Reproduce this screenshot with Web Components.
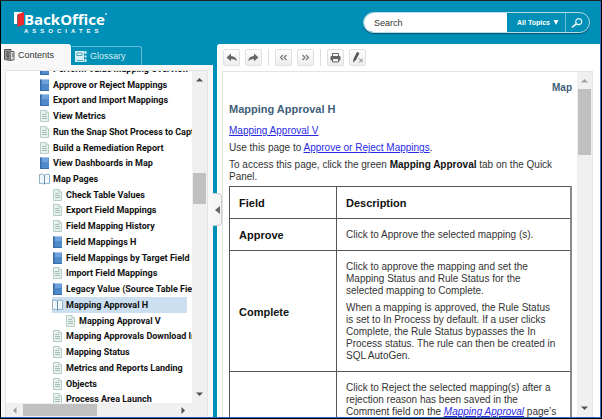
<!DOCTYPE html>
<html lang="en">
<head>
<meta charset="utf-8">
<title>Mapping Approval H</title>
<style>
html,body{height:100%;margin:0}
body{font-family:"Liberation Sans",Arial,sans-serif;--teal:#008fb6;background:#000}
</style>
</head>
<body>
<help-app>
  <brand-bar slot="header"><search-box></search-box></brand-bar>
  <nav-pane slot="nav"></nav-pane>
  <topic-pane slot="topic">
    <topic-doc></topic-doc>
  </topic-pane>
</help-app>

<script>
const define = (name, html, init) => {
  const t = document.createElement('template');
  t.innerHTML = '<style>*{box-sizing:border-box}</style>' + html;
  customElements.define(name, class extends HTMLElement {
    connectedCallback() {
      if (this.shadowRoot) return;
      this.attachShadow({mode: 'open'}).append(t.content.cloneNode(true));
      if (init) init(this, this.shadowRoot);
    }
  });
};

define('help-app', `
<style>
:host{display:grid;box-sizing:border-box;height:100vh;grid-template:43px minmax(0,1fr)/212px minmax(0,1fr);column-gap:4px;
 background:var(--teal);border:1px solid #000;border-top-color:#222;box-shadow:inset -1px -1px #3568b8;padding:0 1px 1px 0;overflow:hidden}
slot[name=header]::slotted(*){grid-column:1/-1}
</style>
<slot name="header"></slot><slot name="nav"></slot><slot name="topic"></slot>`);

define('brand-bar', `
<style>
:host{display:flex;justify-content:space-between;align-items:center;padding:0 10px 0 13px;color:#fff}
.logo{display:grid;grid-template-columns:10px auto;align-items:center}
svg{display:block}
.name{font:700 15px/16px "Open Sans",sans-serif;position:relative}
.name::after{content:"";position:absolute;right:-2px;top:2px;width:2px;height:2px;border-radius:1px;background:#cfe9f1}
.sub{grid-column:2;font:700 6px/8px "Liberation Sans",sans-serif;letter-spacing:4px}
</style>
<div class="logo">
<svg width="10" height="16" viewBox="0 0 10 16"><path d="M0 1H8V4H3V13H0Z" fill="#fff"/><path d="M3.5 3.2 10 1V13.5L3.5 16Z" fill="#ee2a2e"/></svg>
<span class="name">BackOffice</span><span class="sub">ASSOCIATES</span>
</div>
<slot></slot>`);

define('search-box', `
<style>
:host{display:block;flex:0 1 227px}
form{display:flex;height:21px;border-radius:11px;border:1px solid #b5dce8;box-shadow:0 1px 1px #0a5069;overflow:hidden}
input{flex:1;min-width:0;border:0;padding:0 10px;background:#fff;font:9px "Liberation Sans",sans-serif;color:#333;outline:0}
input::placeholder{color:#333;opacity:1}
.pick{display:flex;align-items:center;padding:0 6px 0 10px;gap:3px;border-right:1px solid #6fc0d6}
select{appearance:none;border:0;padding:0;background:none;color:#fff;font:700 7px "Liberation Sans",sans-serif}
option{color:#333}
button{border:0;padding:0 6px 0 5px;background:none;display:flex;align-items:center}
</style>
<form onsubmit="return false">
<input aria-label="Search" placeholder="Search">
<span class="pick"><select aria-label="Topics"><option>All Topics</option></select>
<svg width="6" height="5" viewBox="0 0 6 5"><path d="M.5 0h5L3 5Z" fill="#fff"/></svg></span>
<button aria-label="Run search"><svg width="12" height="10" viewBox="0 0 12 10" fill="none" stroke="#e8f5f9"><circle cx="7.7" cy="3.7" r="3" stroke-width="1.2"/><path d="M5.3 5.8 1 9.3" stroke-width="1.7"/></svg></button>
</form>`);

define('scroll-bar', `
<style>
:host{display:flex;flex-direction:column;background:#f0f0f0;min-width:0;min-height:0}
:host([across]){flex-direction:row}
svg{flex:none;display:block;margin:auto}
.end{flex:0 0 17px;display:flex}
.thumb{background:#c0c0c0;margin:0 1px}
:host([across]) .thumb{margin:1px 0}
</style>
<span class="end"><svg width="7" height="7" viewBox="0 0 7 7"><path/></svg></span>
<span class="pre"></span><span class="thumb"></span><span class="post"></span>
<span class="end"><svg width="7" height="7" viewBox="0 0 7 7"><path/></svg></span>`,
(el, root) => {
  const [a, b] = root.querySelectorAll('path');
  const across = el.hasAttribute('across');
  a.setAttribute('d', across ? 'M5.5 0v7L2 3.5Z' : 'M0 5.5h7L3.5 2Z');
  b.setAttribute('d', across ? 'M1.5 0v7L5 3.5Z' : 'M0 1.5h7L3.5 5Z');
  a.setAttribute('fill', el.hasAttribute('at-start') ? '#a0a0a0' : '#505050');
  b.setAttribute('fill', '#505050');
  el.getAttribute('parts').split(' ').forEach((n, i) => {
    root.querySelector(['.pre', '.thumb', '.post'][i]).style.flex = n + ' 1 0';
  });
});

define('nav-pane', `
<style>
:host{display:flex;flex-direction:column;min-height:0;min-width:0}
.tabs{display:flex;gap:1px;height:21px;flex:none;align-items:stretch}
button{display:flex;align-items:center;gap:3px;width:70px;padding:0 0 0 3px;border:0;font:9px "Liberation Sans",sans-serif;
 background:#f8f8f8;color:#333;border-radius:0 3px 0 0}
button.off{margin-top:2px;background:none;color:#d8eef4;border:solid #62b9d0;border-width:1px 1px 0 0}
.body{flex:1;min-height:0;background:#f7f7f7;padding:5px 5px 0 4px;display:flex}
.box{flex:1;min-width:0;display:grid;grid-template:minmax(0,1fr) 14px/minmax(0,1fr) 15px;border:1px solid #e3e3e3;border-bottom:0;background:#fff}
.view{overflow:hidden;display:flex;min-height:0}
.corner{background:#f0f0f0}
</style>
<div class="tabs" role="tablist">
<button role="tab" aria-selected="true"><svg width="11" height="12" viewBox="0 0 11 12"><path d="M.5 .5H7V11.500L.5 10.5Z" fill="#999" stroke="#555"/><path d="M7 2.500h3v8.500H7" fill="#ddd" stroke="#666"/><path d="M2 3h3.500M2 5h3.500M2 7h3.500M4 7v3M8 5h1.500M8 7h1.500" stroke="#444"/></svg>Contents</button>
<button role="tab" class="off"><svg width="12" height="12" viewBox="0 0 12 12"><path d="M0 1h9v11H0Z" fill="#d5edf4"/><path d="M2 3h5v2.500H2ZM2 10.500h6" fill="#fff" stroke="#3ea4c0"/><path d="M10.500 1v3M10.500 5.500v2M10.500 9v3" stroke="#d5edf4" stroke-width="2"/></svg>Glossary</button>
</div>
<div class="body"><div class="box">
<div class="view"><topic-tree></topic-tree></div>
<scroll-bar parts="85 31 183"></scroll-bar>
<scroll-bar across at-start parts="0 74 79"></scroll-bar>
<span class="corner"></span>
</div></div>`);

define('topic-tree', `
<style>
:host{display:flex;flex-direction:column;flex:1;min-width:0;margin:-10px 0 -4px;padding-right:5px}
</style>`, (el, root) => {
  [[1,'book','Perform Value Mapping Overview'],[1,'book','Approve or Reject Mappings'],[1,'book','Export and Import Mappings'],
   [1,'page','View Metrics'],[1,'page','Run the Snap Shot Process to Capture'],[1,'page','Build a Remediation Report'],
   [1,'book','View Dashboards in Map'],[1,'open','Map Pages'],[2,'page','Check Table Values'],[2,'page','Export Field Mappings'],
   [2,'page','Field Mapping History'],[2,'book','Field Mappings H'],[2,'book','Field Mappings by Target Field'],
   [2,'page','Import Field Mappings'],[2,'book','Legacy Value (Source Table Field)'],[2,'open','Mapping Approval H',1],
   [3,'page','Mapping Approval V'],[2,'page','Mapping Approvals Download Import'],[2,'page','Mapping Status'],
   [2,'page','Metrics and Reports Landing'],[2,'page','Objects'],[2,'page','Process Area Launch']
  ].forEach(([level, kind, text, on]) => {
    const n = document.createElement('tree-node');
    n.setAttribute('level', level); n.setAttribute('kind', kind);
    if (on) n.setAttribute('selected', '');
    n.textContent = text;
    root.append(n);
  });
});

const GLYPHS = {
  book: '<path d="M1 .5h9v11H1Z" fill="#4f8acb"/><path d="M1 .5h1.500v11H1Z" fill="#3a6cab"/><path d="M3 1h6.500v4H3Z" fill="#6fa2da"/><path d="M1 11.500H10" stroke="#3a6cab"/>',
  page: '<path d="M1.500.5h5.500l2.500 2.500v8.500h-8Z" fill="#e6f1ee" stroke="#b7cec8"/><path d="M7 .5v2.500h2.500" fill="#fff" stroke="#a9c3bc"/><path d="M3 4.500h4M3 6.500h5M3 8.500h5" stroke="#a5c0ba"/>',
  open: '<path d="M.5 1.500q3-1 5 .7 2-1.700 5-.7v9q-3-.8-5 .5-2-1.300-5-.5Z" fill="#f5fafc" stroke="#8fadc3"/><path d="M5.500 2v9" stroke="#5d8db5"/><path d="M2 4h2M2 6h2M7 4h2M7 6h2" stroke="#dbe8f0"/>'
};
define('tree-node', `
<style>
:host{display:flex;flex:1 0 15px;min-height:15px}
:host([level="1"]){padding-left:33px}:host([level="2"]){padding-left:46px}:host([level="3"]){padding-left:59px}
a{flex:1;min-width:0;display:flex;align-items:center;gap:3px;color:#111;text-decoration:none;white-space:nowrap;font:700 9px/12px Roboto,"Liberation Sans",sans-serif}
:host([selected]) a{background:#cbdff0}
svg{flex:none}
</style>
<a href="#"><svg width="11" height="12" viewBox="0 0 11 12"></svg><slot></slot></a>`,
(el, root) => { root.querySelector('svg').innerHTML = GLYPHS[el.getAttribute('kind')]; });

const ACTIONS = {
  Back: '<path d="M5 1.500V4q5 .2 6 5-2.500-2-6-2v2.300L.5 5.400Z" fill="#666"/>',
  Forward: '<path d="M6 1.500V4q-5 .2-6 5 2.500-2 6-2v2.300l4.500-3.900Z" fill="#666"/>',
  Previous: '<path d="M5 3 2.500 5.500 5 8M8.500 3 6 5.500 8.500 8" fill="none" stroke="#777" stroke-width="1.200"/>',
  Next: '<path d="M2.500 3 5 5.500 2.500 8M6 3 8.500 5.500 6 8" fill="none" stroke="#777" stroke-width="1.200"/>',
  Print: '<path d="M2.500 4V1.500h6V4" fill="none" stroke="#666"/><rect x=".5" y="4" width="10" height="4.500" rx="1" fill="#666"/><path d="M2.500 6.500h6v3.500h-6Z" fill="#eee" stroke="#666"/>',
  Unhighlight: '<path d="M5 0 7.500 1 4 8 1 10.500 1.500 7Z" fill="#555"/><path d="m7 6.500 4 4m0-4-4 4" stroke="#777"/>'
};
define('tool-button', `
<style>
:host{display:block}
button{display:grid;place-items:center;width:17px;height:17px;padding:0;border:1px solid #e0e0e0;border-radius:2px;background:linear-gradient(#fefefe,#eee)}
</style>
<button><svg width="11" height="11" viewBox="0 0 11 11"></svg></button>`,
(el, root) => {
  const k = el.getAttribute('action');
  root.querySelector('button').setAttribute('aria-label', k);
  root.querySelector('svg').innerHTML = ACTIONS[k];
});

define('topic-pane', `
<style>
:host{display:flex;flex-direction:column;min-width:0;min-height:0;position:relative;background:#fff;border-radius:3px 0 0 0;padding:5px 7px 0 5px}
.tools{display:flex;gap:5px;padding:0 1px;margin-bottom:5px;flex:none}
i{width:1px;background:#ddd;margin:0 1px}
.frame{flex:1;min-height:0;display:grid;grid-template-columns:minmax(0,1fr) 15px;grid-template-rows:minmax(0,1fr);border:1px solid #e3e3e3;border-bottom:0}
.doc{overflow:hidden;min-height:0}
.fold{position:absolute;left:-4px;top:149px;width:9px;height:33px;padding:0;border:1px solid #ccc;border-left:0;border-radius:0 4px 4px 0;background:#f5f5f5;display:grid;place-items:center}
</style>
<div class="tools">
<tool-button action="Back"></tool-button><tool-button action="Forward"></tool-button><i></i>
<tool-button action="Previous"></tool-button><tool-button action="Next"></tool-button><i></i>
<tool-button action="Print"></tool-button><tool-button action="Unhighlight"></tool-button>
</div>
<div class="frame"><div class="doc"><slot></slot></div><scroll-bar at-start parts="0 66 247"></scroll-bar></div>
<button class="fold" aria-label="Hide navigation"><svg width="5" height="8" viewBox="0 0 5 8"><path d="M5 0v8L0 4Z" fill="#666"/></svg></button>`);

define('topic-doc', `
<style>
:host{display:block;padding:10px 5px 0 6px;font-size:10px;line-height:12px;color:#333}
p{margin:0 0 5px}
a{color:#2a2ae6}
.crumb{text-align:right;font-weight:700;color:#3f6078;margin:0 0 8px}
h1{margin:0 0 9px;font-size:11px;line-height:14px;color:#3f6078}
b{color:#111}
.intro{margin-bottom:3px}
table{width:100%;border-collapse:collapse}
th,td{border:1px solid #555;padding:10px 9px 9px;text-align:left;vertical-align:middle}
th{font-size:11px;color:#111;width:107px}
th:last-child{width:auto}
tr>:last-child{border-right:2px solid #888}
td p:last-child{margin:0}
</style>
<p class="crumb">Map</p>
<h1>Mapping Approval H</h1>
<p><a href="#">Mapping Approval V</a></p>
<p>Use this page to <a href="#">Approve or Reject Mappings</a>.</p>
<p class="intro">To access this page, click the green <b>Mapping Approval</b> tab on the Quick<br>Panel.</p>
<table>
<thead><tr><th>Field</th><th>Description</th></tr></thead>
<tbody>
<tr><th scope="row">Approve</th><td>Click to Approve the selected mapping (s).</td></tr>
<tr><th scope="row">Complete</th><td><p>Click to approve the mapping and set the<br>Mapping Status and Rule Status for the<br>selected mapping to Complete.</p><p>When a mapping is approved, the Rule Status<br>is set to In Process by default. If a user clicks<br>Complete, the Rule Status bypasses the In<br>Process status. The rule can then be created in<br>SQL AutoGen.</p></td></tr>
<tr><th></th><td>Click to Reject the selected mapping(s) after a<br>rejection reason has been saved in the<br>Comment field on the <a href="#"><em>Mapping Approval</em></a> page’s</td></tr>
</tbody></table>`);
</script>
</body>
</html>
